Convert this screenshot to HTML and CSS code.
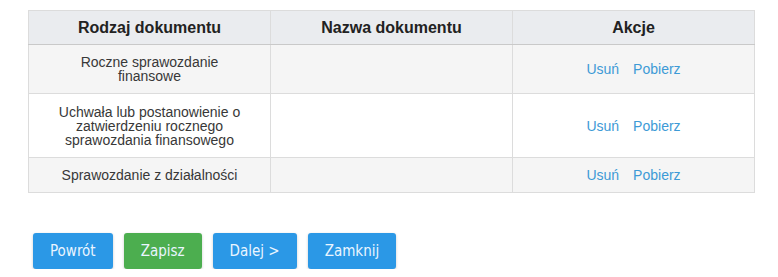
FILE: index.html
```html
<!DOCTYPE html>
<html lang="pl">
<head>
  <meta charset="UTF-8" />
  <title>Dokumenty</title>
  <link rel="stylesheet" href="styles.css">
</head>
<body>

  <div class="container">
    <!-- Lista dokumentow -->
    <table class="docs">
      <thead>
        <tr>
          <th>Rodzaj dokumentu</th>
          <th>Nazwa dokumentu</th>
          <th>Akcje</th>
        </tr>
      </thead>
      <tbody>
        <tr class="row-1">
          <td class="type">Roczne sprawozdanie finansowe</td>
          <td></td>
          <td class="actions"><a href="#">Usuń</a><a href="#">Pobierz</a></td>
        </tr>
        <tr class="row-2">
          <td class="type">Uchwała lub postanowienie o zatwierdzeniu rocznego sprawozdania finansowego</td>
          <td></td>
          <td class="actions"><a href="#">Usuń</a><a href="#">Pobierz</a></td>
        </tr>
        <tr class="row-3">
          <td class="type">Sprawozdanie z działalności</td>
          <td></td>
          <td class="actions"><a href="#">Usuń</a><a href="#">Pobierz</a></td>
        </tr>
      </tbody>
    </table>

    <!-- Przyciski -->
    <div class="buttons">
      <div class="btn btn-blue">Powrót</div>
      <div class="btn btn-green">Zapisz</div>
      <div class="btn btn-blue">Dalej &gt;</div>
      <div class="btn btn-blue">Zamknij</div>
    </div>
  </div>

</body>
</html>
```

FILE: styles.css
```css
body {
  font-family: "Liberation Sans", Arial, sans-serif;
  background-color: #fff;
  margin: 0;
  padding: 0;
}

.container {
  padding: 10px 0 0 28px;
}

.docs {
  width: 727px;
  border-collapse: collapse;
  table-layout: fixed;
  border: 1px solid #c9c9c9;
}

.docs th,
.docs td {
  border: 1px solid #dcdcdc;
  text-align: center;
  vertical-align: middle;
}

.docs th {
  background-color: #eaecef;
  color: #222;
  font-size: 16px;
  font-weight: bold;
  height: 33px;
  padding: 0;
  border-bottom: 1px solid #c9c9c9;
}

.docs td {
  font-size: 14px;
  color: #383838;
  line-height: 14px;
  padding: 0 24px;
}

.row-1 td {
  background-color: #f5f5f5;
  height: 48px;
}

.row-2 td {
  background-color: #fff;
  height: 63px;
}

.row-3 td {
  background-color: #f5f5f5;
  height: 34px;
}

.actions a {
  color: #3d9ad6;
  text-decoration: none;
  margin: 0 7px;
}

.buttons {
  display: flex;
  gap: 11px;
  margin-top: 40px;
  padding-left: 5px;
}

.btn {
  height: 36px;
  line-height: 36px;
  padding: 0 17px;
  border-radius: 3px;
  color: #eaf5ff;
  font-family: "DejaVu Sans Condensed", "DejaVu Sans", sans-serif;
  font-size: 15px;
  cursor: pointer;
  box-shadow: 0 1px 3px rgba(0, 0, 0, 0.2);
}

.btn-blue {
  background-color: #2b98e6;
}

.btn-green {
  background-color: #4cae4f;
}
```
